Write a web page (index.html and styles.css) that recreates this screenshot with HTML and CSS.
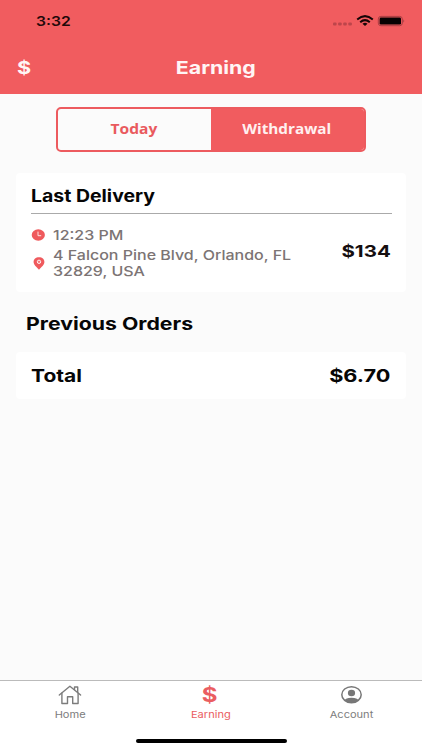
FILE: index.html
```html
<!DOCTYPE html>
<html lang="en">
<head>
<meta charset="utf-8">
<meta name="viewport" content="width=device-width, initial-scale=1">
<title>Earning</title>
<link rel="stylesheet" href="styles.css">
</head>
<body>
<div class="app">
  <header class="header">
    <div class="status">
      <span class="wide clock">3:32</span>
      <svg class="status-icons" width="73" height="14" viewBox="0 0 73 14">
        <g fill="#bd454b"><rect x="1" y="8.5" width="3.6" height="3" rx="1"/><rect x="6.1" y="8.5" width="3.6" height="3" rx="1"/><rect x="11.2" y="8.5" width="3.6" height="3" rx="1"/><rect x="16.3" y="8.5" width="3.6" height="3" rx="1"/></g>
        <g fill="none" stroke="#160506" stroke-width="2"><path d="M25.2 5.4Q33 -1.2 40.8 5.4"/><path d="M28.2 8.2Q33 4 37.8 8.2"/></g>
        <path d="M30.5 9.7Q33 7.7 35.5 9.7L33 12Z" fill="#160506"/>
        <rect x="46.3" y="2.4" width="24" height="9.3" rx="2.6" fill="none" stroke="#a83e43"/>
        <rect x="47.6" y="3.6" width="21.4" height="7" rx="1.3" fill="#080203"/>
        <path d="M71.5 5.3q1.5 1.7 0 3.4z" fill="#8c3338"/>
      </svg>
    </div>
    <div class="title-bar">
      <span class="wide dollar">$</span>
      <h1 class="wide title">Earning</h1>
      <span></span>
    </div>
  </header>

  <main class="content">
    <div class="segment">
      <div class="segment-item"><span class="wide today">Today</span></div>
      <div class="segment-item active"><span class="wide withdrawal">Withdrawal</span></div>
    </div>

    <section class="card delivery">
      <h2 class="wide heading last">Last Delivery</h2>
      <div class="delivery-body">
        <div class="details">
          <div class="row">
            <svg class="icon" width="14" height="12" viewBox="0 0 14 12"><ellipse cx="7.3" cy="6" rx="6.6" ry="5.7" fill="#ef5a5d"/><path d="M7 2.6V6.7H10.2" fill="none" stroke="#ffe3e3" stroke-width="1"/></svg>
            <span class="wide info time">12:23 PM</span>
          </div>
          <div class="row">
            <svg class="icon" width="14" height="13" viewBox="0 0 14 13"><path d="M8 .2C4.7.2 2.6 2.1 2.6 4.9 2.6 7.8 5.6 9.8 8 12.8 10.4 9.8 13.4 7.8 13.4 4.9 13.4 2.1 11.3.2 8 .2Z" fill="#ef5a5d"/><circle cx="8" cy="4.8" r="1.7" fill="#f27679" stroke="#fff" stroke-width=".9"/></svg>
            <span class="wide info address">4 Falcon Pine Blvd, Orlando, FL<br>32829, USA</span>
          </div>
        </div>
        <span class="wide price">$134</span>
      </div>
    </section>

    <h2 class="wide heading previous">Previous Orders</h2>

    <section class="card total">
      <span class="wide heading total-label">Total</span>
      <span class="wide heading total-value">$6.70</span>
    </section>
  </main>

  <footer class="footer">
    <nav class="tabs">
      <div class="tab">
        <svg width="24" height="20" viewBox="0 0 24 20" fill="none" stroke="#7c7c7c" stroke-width="1.4" stroke-linejoin="round" stroke-linecap="round"><path d="M1.3 10 11.9 1.2 22.6 10"/><path d="M3.9 8.3V18.5H9.5V11.8H14.7V18.5H20.1V8.3"/><path d="M16.5 4.5V2H19.7V7.3"/></svg>
        <span class="wide label home">Home</span>
      </div>
      <div class="tab current">
        <span class="tab-dollar-box"><span class="wide tab-dollar">$</span></span>
        <span class="wide label">Earning</span>
      </div>
      <div class="tab">
        <svg width="24" height="20" viewBox="0 0 24 20"><defs><clipPath id="head"><ellipse cx="11.5" cy="9.7" rx="9.8" ry="8.1"/></clipPath></defs><ellipse cx="11.5" cy="9.7" rx="9.7" ry="8" fill="none" stroke="#777" stroke-width="1.5"/><ellipse cx="11.5" cy="8" rx="3.6" ry="3.3" fill="#777"/><ellipse cx="11.5" cy="16.3" rx="7.6" ry="3.6" fill="#777" clip-path="url(#head)"/></svg>
        <span class="wide label">Account</span>
      </div>
    </nav>
    <div class="home-indicator"></div>
  </footer>
</div>
</body>
</html>
```
FILE: styles.css
```css
* { box-sizing: border-box; }
body { margin: 0; font-family: Inter, "Liberation Sans", sans-serif; color: #060606; background: #fbfbfb; }
.app { width: 422px; height: 750px; display: flex; flex-direction: column; overflow: hidden; }
h1, h2 { margin: 0; font: inherit; }
svg { display: block; flex: none; }

/* Horizontally expanded lettering; --sx is the width factor. */
.wide { display: block; white-space: nowrap; transform: scaleX(var(--sx, 1.2)); transform-origin: left center; }

.header { height: 94px; background: #f15c5f; flex: none; }
.status { height: 42px; padding: 0 17px 0 35.5px; display: flex; justify-content: space-between; align-items: center; }
.clock { --sx: 1.16; font-size: 13.5px; font-weight: 600; color: #210809; }
.title-bar { height: 50px; padding: 0 8px 0 17px; display: grid; grid-template-columns: 1fr auto 1fr; align-items: center; color: #fff5f5; }
.title { --sx: 1.22; font-size: 17.5px; font-weight: 650; transform-origin: center; }
.dollar { font-size: 18px; font-weight: 700; }

.content { flex: 1; padding: 13px 16px 0; }
.segment { width: 310px; height: 45px; margin: 0 auto; display: flex; border: 2px solid #ed5b5f; border-radius: 5px; overflow: hidden; font-family: "Open Sans", sans-serif; font-size: 13.3px; line-height: 19px; font-weight: 700; color: #e95a5e; }
.segment-item { flex: 1; display: flex; align-items: center; justify-content: center; padding: 0 1px 0 0; }
.segment-item .wide { transform-origin: center; }
.today { --sx: 1.17; }
.withdrawal { --sx: 1.15; }
.segment-item.active { background: #f15c5f; color: #fff0f0; }

.card { background: #fff; border-radius: 4px; }
.delivery { height: 119px; margin-top: 21px; padding: 0 14px 0 15px; }
.heading { font-size: 17.5px; font-weight: 650; line-height: 22px; }
.last { --sx: 1.145; height: 40px; padding-top: 12px; font-size: 17px; }
.delivery-body { height: 79px; padding: 13px 1px 0 0; border-top: 1px solid #aaa; display: flex; justify-content: space-between; }
.row { display: flex; align-items: center; gap: 7.5px; }
.info { --sx: 1.185; font-size: 13.5px; line-height: 16px; font-weight: 500; color: #7c7474; }
.row + .row { margin-top: 4px; }
.price { --sx: 1.24; margin-top: 14px; font-size: 16.5px; line-height: 20px; font-weight: 650; color: #150e0f; transform-origin: right; }

.previous { --sx: 1.215; margin: 21px 0 0 10px; }
.total { height: 47px; margin-top: 17px; padding: 0 16px 0 15px; display: flex; justify-content: space-between; align-items: center; }
.total-value { --sx: 1.24; transform-origin: right; }

.footer { height: 70px; background: #fff; border-top: 1px solid #bbb; flex: none; display: flex; flex-direction: column; justify-content: space-between; align-items: center; padding-bottom: 7px; }
.tabs { width: 100%; display: grid; grid-template-columns: repeat(3, 1fr); padding-top: 4px; color: #7d7d7d; }
.tab { display: flex; flex-direction: column; align-items: center; gap: 3px; }
.current { color: #ea5d61; }
.label { --sx: 1.18; font-size: 9.4px; line-height: 13px; font-weight: 430; transform-origin: center; }
.tab-dollar-box { height: 20px; padding-right: 2px; display: flex; align-items: center; }
.tab-dollar { font-size: 20px; line-height: 20px; font-weight: 700; transform-origin: center; }
.home-indicator { width: 151px; height: 4px; border-radius: 2px; background: #000; }
```
